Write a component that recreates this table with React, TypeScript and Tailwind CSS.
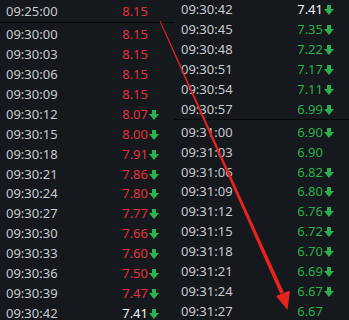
type Row = [string, string, "r" | "g" | "w", boolean];

const left: Row[] = [
  ["09:25:00", "8.15", "r", false],
  ["09:30:00", "8.15", "r", false],
  ["09:30:03", "8.15", "r", false],
  ["09:30:06", "8.15", "r", false],
  ["09:30:09", "8.15", "r", false],
  ["09:30:12", "8.07", "r", true],
  ["09:30:15", "8.00", "r", true],
  ["09:30:18", "7.91", "r", true],
  ["09:30:21", "7.86", "r", true],
  ["09:30:24", "7.80", "r", true],
  ["09:30:27", "7.77", "r", true],
  ["09:30:30", "7.66", "r", true],
  ["09:30:33", "7.60", "r", true],
  ["09:30:36", "7.50", "r", true],
  ["09:30:39", "7.47", "r", true],
  ["09:30:42", "7.41", "w", true],
];

const right: Row[] = [
  ["09:30:42", "7.41", "w", true],
  ["09:30:45", "7.35", "g", true],
  ["09:30:48", "7.22", "g", true],
  ["09:30:51", "7.17", "g", true],
  ["09:30:54", "7.11", "g", true],
  ["09:30:57", "6.99", "g", true],
  ["09:31:00", "6.90", "g", true],
  ["09:31:03", "6.90", "g", false],
  ["09:31:06", "6.82", "g", true],
  ["09:31:09", "6.80", "g", true],
  ["09:31:12", "6.76", "g", true],
  ["09:31:15", "6.72", "g", true],
  ["09:31:18", "6.70", "g", true],
  ["09:31:21", "6.69", "g", true],
  ["09:31:24", "6.67", "g", true],
  ["09:31:27", "6.67", "g", false],
];

const colors = {
  r: "text-[#e3323f]",
  g: "text-[#2cb24c]",
  w: "text-[#f2f2f2]",
};

function DownArrow() {
  return (
    <svg width="10" height="10" viewBox="0 0 10 10" className="block">
      <rect x="3" y="0" width="4" height="5" fill="#2cb24c" />
      <polygon points="0,4 10,4 5,10" fill="#2cb24c" />
    </svg>
  );
}

function TickRow({ row, pl }: { row: Row; pl: string }) {
  let [time, price, tone, down] = row;
  return (
    <div className={`flex h-[19.9px] items-center ${pl} pr-[15px]`}>
      <span className="text-[#c8cbcf]">{time}</span>
      <span className={`ml-auto text-right ${colors[tone]}`}>{price}</span>
      <span className="ml-[1px] flex w-[10px] items-center pt-[1px]">
        {down && <DownArrow />}
      </span>
    </div>
  );
}

function Column({ rows, split, width, pl, top }: { rows: Row[]; split: number; width: string; pl: string; top: string }) {
  return (
    <div className={`flex flex-col ${width} ${top}`}>
      {rows.slice(0, split).map((r, i) => (
        <TickRow key={i} row={r} pl={pl} />
      ))}
      <div className="h-px bg-[#050607]" />
      <div className="mt-[2px] flex flex-col">
        {rows.slice(split).map((r, i) => (
          <TickRow key={i} row={r} pl={pl} />
        ))}
      </div>
    </div>
  );
}

export default function App() {
  return (
    <div className="relative h-[320px] w-[349px] overflow-hidden bg-[#15181c] text-[13px] leading-none font-['Noto_Sans',sans-serif]">
      <div className="flex">
        <Column rows={left} split={1} width="w-[174px]" pl="pl-[6px]" top="pt-[2px]" />
        <Column rows={right} split={6} width="w-[175px]" pl="pl-[7px]" top="pt-0" />
      </div>

      <svg className="pointer-events-none absolute inset-0" width="349" height="320" viewBox="0 0 349 320">
        <polygon points="159.6,21.2 160.4,20.8 283.8,292.2 280.2,293.8" fill="#e8231f" />
        <polygon points="276,296 290,290.5 287.5,310" fill="#e8231f" />
      </svg>
    </div>
  );
}
